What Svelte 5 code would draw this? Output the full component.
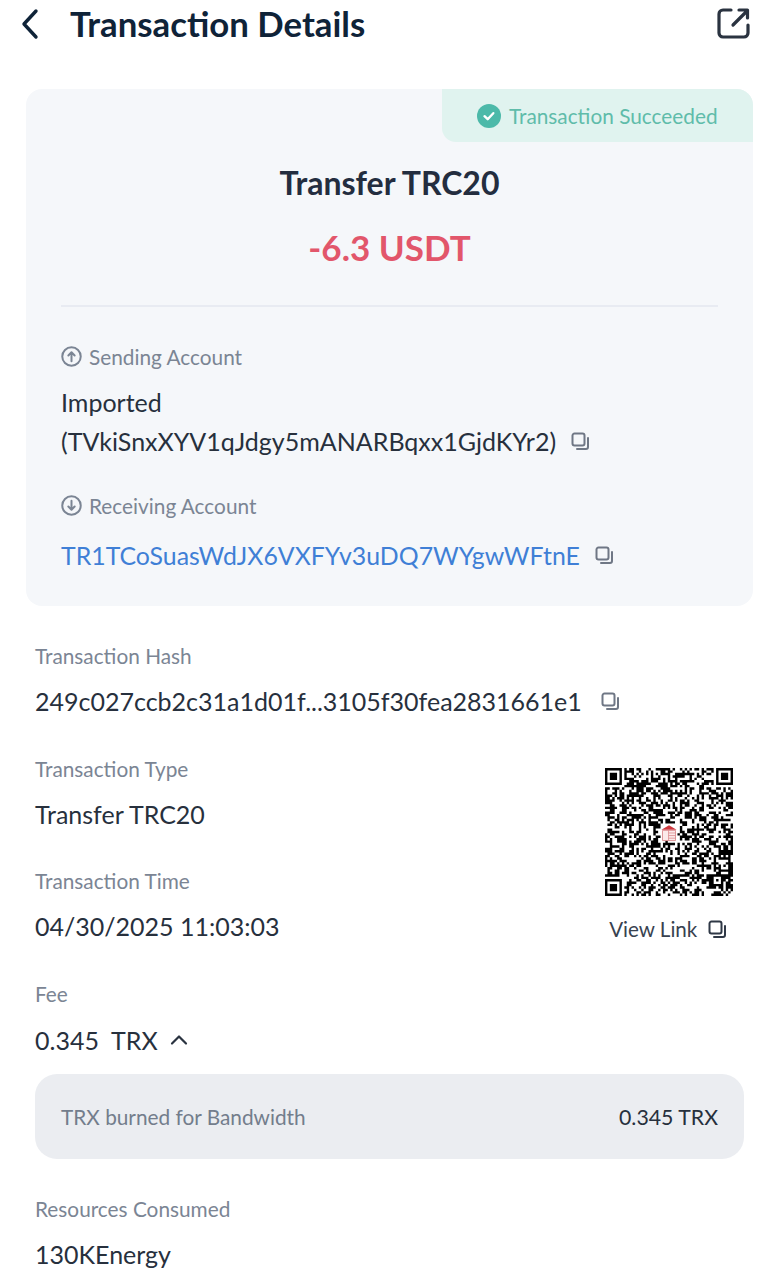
<script>
  const N = 53;
  function fixed(r, c) {
    for (const [ox, oy] of [[0, 0], [N - 7, 0], [0, N - 7]]) {
      if (r >= oy && r < oy + 7 && c >= ox && c < ox + 7) {
        const x = c - ox, y = r - oy;
        return x === 0 || x === 6 || y === 0 || y === 6 || (x >= 2 && x <= 4 && y >= 2 && y <= 4) ? 1 : 0;
      }
    }
    if ((r < 8 && c < 8) || (r < 8 && c >= N - 8) || (r >= N - 8 && c < 8)) return 0;
    if (r >= N - 9 && r < N - 4 && c >= N - 9 && c < N - 4) {
      const x = c - (N - 9), y = r - (N - 9);
      return x === 0 || x === 4 || y === 0 || y === 4 || (x === 2 && y === 2) ? 1 : 0;
    }
    if (r >= 23 && r <= 29 && c >= 23 && c <= 29) return 0;
    return -1;
  }
  let seed = 20250430;
  let d = "";
  for (let r = 0; r < N; r++) {
    for (let c = 0; c < N; c++) {
      seed = (seed * 1664525 + 1013904223) >>> 0;
      const f = fixed(r, c);
      const on = f === -1 ? (seed >>> 16) % 100 < 52 : f === 1;
      if (on) d += `M${c} ${r}h1v1h-1z`;
    }
  }
  const copyFront = "M3.500 1.500h8a2 2 0 0 1 2 2v8a2 2 0 0 1-2 2h-8a2 2 0 0 1-2-2v-8a2 2 0 0 1 2-2z";
  const copyBack = "M17 6v9a2 2 0 0 1-2 2H6";
</script>

{#snippet copy(cls)}
  <svg class={cls} viewBox="0 0 18.500 18.500" fill="none" stroke="currentColor" stroke-width="2" stroke-linecap="round" stroke-linejoin="round">
    <path d={copyFront} />
    <path d={copyBack} />
  </svg>
{/snippet}

<div class="page">
  <header class="bar">
    <svg class="back" viewBox="0 0 20 32" fill="none" stroke="#0f2338" stroke-width="3.400" stroke-linecap="round" stroke-linejoin="round">
      <path d="M16 3 4 16l12 13" />
    </svg>
    <h1>Transaction Details</h1>
    <svg class="share" viewBox="0 0 33 32" fill="none" stroke="#2a3340" stroke-width="3.200" stroke-linecap="round" stroke-linejoin="round">
      <path d="M14 3H6a4 4 0 0 0-4 4v19a4 4 0 0 0 4 4h21a4 4 0 0 0 4-4v-8" />
      <path d="M16 18 30 4M22 3h8.500v8" />
    </svg>
  </header>

  <section class="card">
    <div class="badge">
      <svg class="check" viewBox="0 0 24 24">
        <circle cx="12" cy="12" r="12" fill="#4cb9a9" />
        <path d="M7.500 12.200l3.200 3 5.600-6" fill="none" stroke="#fff" stroke-width="2.400" stroke-linecap="round" stroke-linejoin="round" />
      </svg>
      <span>Transaction Succeeded</span>
    </div>
    <div class="head">
      <div class="kind">Transfer TRC20</div>
      <div class="amount">-6.3 USDT</div>
    </div>
    <div class="rule"></div>
    <div class="acct-label">
      <svg viewBox="0 0 20 20" fill="none" stroke="#7b8594" stroke-width="1.900" stroke-linecap="round" stroke-linejoin="round">
        <circle cx="10" cy="10" r="8.800" />
        <path d="M10 14.500v-8M7 9l3-3 3 3" />
      </svg>
      <span>Sending Account</span>
    </div>
    <div class="acct-value">Imported</div>
    <div class="acct-value line2">
      (TVkiSnxXYV1qJdgy5mANARBqxx1GjdKYr2)
      {@render copy("copy")}
    </div>
    <div class="acct-label second">
      <svg viewBox="0 0 20 20" fill="none" stroke="#7b8594" stroke-width="1.900" stroke-linecap="round" stroke-linejoin="round">
        <circle cx="10" cy="10" r="8.800" />
        <path d="M10 5.500v8M7 11l3 3 3-3" />
      </svg>
      <span>Receiving Account</span>
    </div>
    <div class="acct-value link">
      TR1TCoSuasWdJX6VXFYv3uDQ7WYgwWFtnE
      {@render copy("copy")}
    </div>
  </section>

  <section class="details">
    <div class="label">Transaction Hash</div>
    <div class="value first">
      249c027ccb2c31a1d01f...3105f30fea2831661e1
      {@render copy("copy hash")}
    </div>

    <div class="split">
      <div>
        <div class="label">Transaction Type</div>
        <div class="value">Transfer TRC20</div>
        <div class="label">Transaction Time</div>
        <div class="value">04/30/2025 11:03:03</div>
      </div>
      <div class="qr-col">
        <svg class="qr" viewBox="0 0 {N} {N}">
          <path {d} fill="#000" />
          <g transform="translate(22.900 23.300) scale(.9)">
            <path d="M0.500 2.500 4 0.400 7.500 2.500z" fill="#d0393f" />
            <path d="M1 2.800h6V7.500H1z" fill="#fbeaea" stroke="#d98588" stroke-width=".4" />
            <path d="M3.800 4H7M3.800 5.200H7M3.800 6.400H7M3.800 2.800V7.500" stroke="#d98588" stroke-width=".35" />
          </g>
        </svg>
        <div class="view-link">
          View Link
          {@render copy("copy dark")}
        </div>
      </div>
    </div>

    <div class="label">Fee</div>
    <div class="value fee">
      <span>0.345&nbsp;&nbsp;TRX</span>
      <svg class="caret" viewBox="0 0 18 12" fill="none" stroke="#2a3340" stroke-width="2.200" stroke-linecap="round" stroke-linejoin="round">
        <path d="M2 9.500 9 2.500l7 7" />
      </svg>
    </div>
    <div class="panel">
      <span>TRX burned for Bandwidth</span>
      <span class="panel-value">0.345 TRX</span>
    </div>

    <div class="label">Resources Consumed</div>
    <div class="value">130KEnergy</div>
  </section>
</div>

<style>
  :global(body) {
    margin: 0;
    background: #fff;
  }
  .page {
    width: 779px;
    height: 1280px;
    overflow: hidden;
    font-family: Lato, "Liberation Sans", sans-serif;
    color: #27303d;
  }
  .bar {
    height: 50px;
    display: flex;
    align-items: center;
    padding: 0 29px 0 20px;
    color: #0f2338;
  }
  .back {
    width: 20px;
    height: 32px;
    margin-right: 30px;
    margin-top: -2px;
  }
  h1 {
    flex: 1;
    margin: -2px 0 0;
    font-size: 34.750px;
    line-height: 50px;
    font-weight: 700;
    color: #0f2338;
  }
  .share {
    width: 33px;
    height: 32px;
    margin-top: -4px;
  }
  .card {
    position: relative;
    margin: 39px 26px 0;
    height: 517px;
    box-sizing: border-box;
    padding: 0 35px;
    border-radius: 16px;
    background: #f5f7fa;
    overflow: hidden;
  }
  .badge {
    position: absolute;
    top: 0;
    right: 0;
    width: 311px;
    height: 53px;
    box-sizing: border-box;
    display: flex;
    align-items: center;
    padding-left: 35px;
    gap: 8px;
    background: #e0f3ef;
    border-bottom-left-radius: 14px;
    color: #5fbcaa;
    font-size: 20.800px;
  }
  .check {
    width: 24px;
    height: 24px;
    flex: none;
  }
  .head {
    padding-top: 74px;
    text-align: center;
  }
  .kind {
    height: 40px;
    line-height: 40px;
    font-size: 32px;
    font-weight: 700;
    color: #232d3f;
  }
  .amount {
    margin-top: 24px;
    height: 40px;
    line-height: 40px;
    font-size: 35px;
    font-weight: 700;
    color: #e2566b;
  }
  .rule {
    height: 2px;
    margin-top: 38px;
    background: #e8ebf2;
  }
  .acct-label {
    margin-top: 34px;
    height: 30px;
    display: flex;
    align-items: center;
    gap: 7px;
    font-size: 20.800px;
    color: #7b8594;
  }
  .acct-label svg {
    width: 21px;
    height: 21px;
    flex: none;
  }
  .acct-label.second {
    margin-top: 34px;
  }
  .acct-value {
    margin-top: 16px;
    height: 30px;
    line-height: 30px;
    font-size: 25px;
    display: flex;
    align-items: center;
    white-space: nowrap;
    color: #27303d;
  }
  .line2 {
    margin-top: 9px;
  }
  .link {
    margin-top: 20px;
    font-size: 24.850px;
    color: #3f7fd6;
  }
  .copy {
    width: 18.500px;
    height: 18.500px;
    margin-left: 15px;
    flex: none;
    color: #6f7785;
  }
  .copy.dark {
    color: #2f3846;
    margin-left: 11px;
  }
  .copy.hash {
    margin-left: 19px;
  }
  .details {
    padding: 35px 35px 0;
  }
  .label {
    height: 30px;
    line-height: 30px;
    font-size: 20.800px;
    color: #7b8594;
  }
  .value {
    margin: 15px 0 37px;
    height: 30px;
    line-height: 30px;
    font-size: 25px;
    display: flex;
    align-items: center;
    white-space: nowrap;
    color: #27303d;
  }
  .value.first {
    margin-bottom: 38px;
  }
  .split {
    display: flex;
    justify-content: space-between;
    margin-right: 11px;
    margin-bottom: 1px;
  }
  .qr-col {
    width: 128px;
    margin-top: 14px;
  }
  .qr {
    display: block;
    width: 128px;
    height: 128px;
  }
  .view-link {
    margin-top: 19px;
    display: flex;
    align-items: center;
    justify-content: center;
    font-size: 20.600px;
    height: 28px;
    white-space: nowrap;
    color: #384250;
    transform: translateX(-1px);
  }
  .fee {
    margin-top: 16px;
    margin-bottom: 19px;
  }
  .caret {
    width: 18px;
    height: 12px;
    margin-left: 12px;
  }
  .panel {
    height: 85px;
    box-sizing: border-box;
    padding: 0 26px;
    display: flex;
    align-items: center;
    justify-content: space-between;
    border-radius: 22px;
    background: #ebedf1;
    font-size: 20.800px;
    color: #737d8c;
    margin-bottom: 35px;
  }
  .panel-value {
    font-size: 21.300px;
    color: #27303d;
  }
</style>
